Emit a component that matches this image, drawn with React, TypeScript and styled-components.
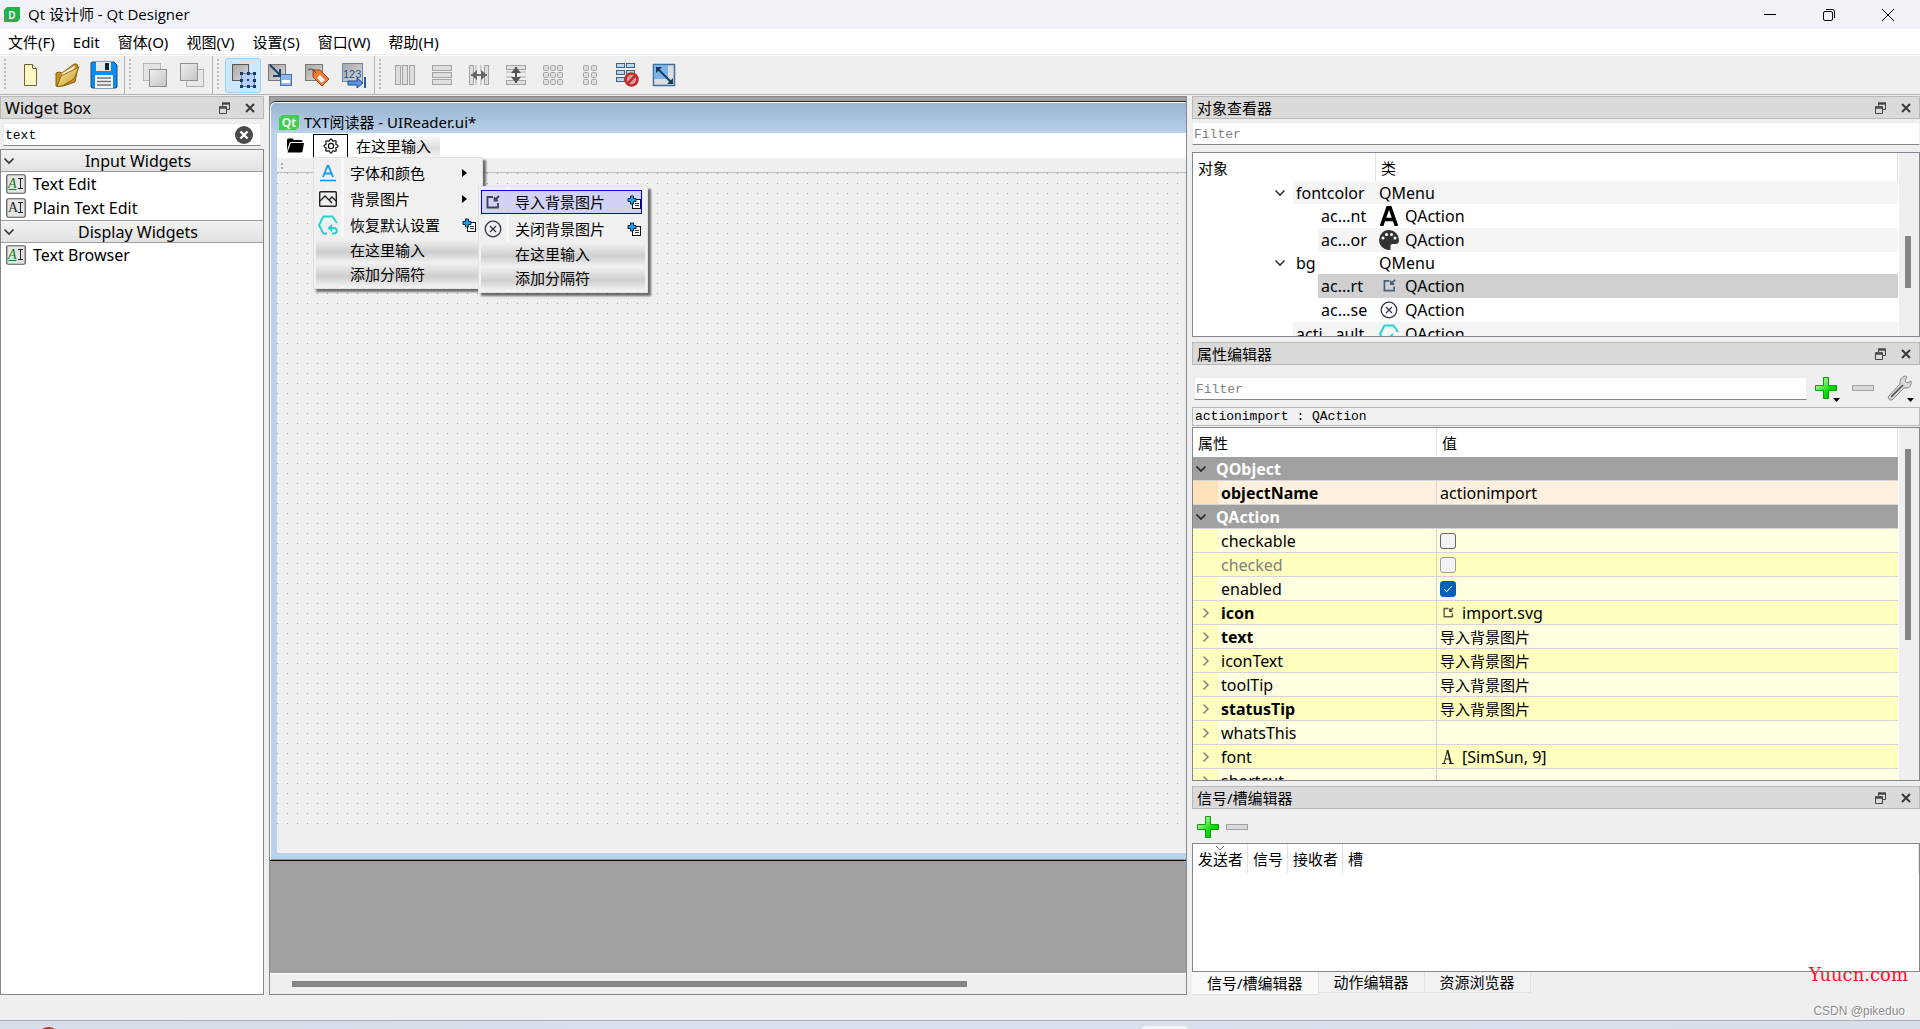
import React from "react";
import styled, { createGlobalStyle, css } from "styled-components";

const UI = `"Noto Sans", "Noto Sans CJK SC", sans-serif`;
const MONO = `"Liberation Mono", "Noto Sans CJK SC", monospace`;

const Global = createGlobalStyle`
  *, *::before, *::after { box-sizing: border-box; }
  body { margin: 0; background: #efefef; font: 15px/22px ${UI}; color: #000; overflow: hidden; }
  button { font: inherit; color: inherit; background: none; border: 0; padding: 0; margin: 0; }
  input { font: inherit; margin: 0; }
  table { border-collapse: separate; border-spacing: 0; }
  svg { display: block; flex: none; }
  h2 { margin: 0; font-weight: 400; }
`;

/* ---------- frame ---------- */
const Window = styled.div`
  display: flex;
  flex-direction: column;
  height: 100vh;
`;
const TitleBar = styled.header`
  display: flex;
  align-items: center;
  flex: none;
  height: 29px;
  padding: 0 3px 0 4px;
  background: #f0f2f8;
`;
const AppTitle = styled.span`
  flex: 1;
  padding: 0 0 2px 8px;
  font-family: "Open Sans", "Noto Sans CJK SC", sans-serif;
`;
const WindowButton = styled.button`
  display: flex;
  align-items: center;
  justify-content: center;
  width: 59px;
  height: 29px;
`;
const MenuBar = styled.nav`
  display: flex;
  align-items: center;
  gap: 18px;
  flex: none;
  height: 27px;
  padding: 0 8px 1px;
  background: linear-gradient(#fff 25px, #ececec 25px, #ececec 26px, #fff 26px);
`;
const ToolBar = styled.div`
  display: flex;
  flex: none;
  height: 39px;
  border-bottom: 1px solid #b4b4b4;
`;
const ToolGroup = styled.div<{ $last?: boolean }>`
  display: flex;
  align-items: center;
  gap: 1px;
  padding-right: 2px;
  border-right: ${(p) => (p.$last ? 0 : 1)}px solid #b4b4b4;
`;
const Grip = styled.span`
  width: 11px;
  height: 32px;
  background: conic-gradient(from 0deg at 6px 2px, transparent 75%, #bdbdbd 0) 0 0 / 11px 4px;
  clip-path: inset(0 0 0 4px);
`;
const ToolButton = styled.button<{ $on?: boolean }>`
  display: flex;
  align-items: center;
  justify-content: center;
  width: 36px;
  height: 35px;
  border: 1px solid ${(p) => (p.$on ? "#99d1ff" : "transparent")};
  border-radius: 3px;
  background: ${(p) => (p.$on ? "#cce8ff" : "transparent")};
`;
const Workspace = styled.main`
  display: grid;
  grid-template-columns: 264px minmax(0, 1fr) 728px;
  column-gap: 5px;
  flex: 1;
  min-height: 0;
  padding-top: 1px;
`;
const StatusBar = styled.footer`
  display: flex;
  align-items: flex-end;
  justify-content: flex-end;
  flex: none;
  height: 25px;
  padding: 0 15px;
  font: 12px/18px "Liberation Sans", sans-serif;
  color: #8c8c8c;
  text-shadow: 1px 1px 0 #fff;
`;
const TaskBar = styled.div`
  flex: none;
  height: 9px;
  overflow: hidden;
  border-top: 1px solid #adb0bc;
  background: linear-gradient(90deg, #d6dce8, #dadfed 40%, #d8deea);
`;

/* ---------- docks ---------- */
const Dock = styled.section<{ $grow?: number }>`
  display: flex;
  flex-direction: column;
  flex: ${(p) => p.$grow ?? 1} 1 0;
  min-height: 0;
  min-width: 0;
`;
const DockHead = styled.header`
  display: flex;
  align-items: center;
  flex: none;
  height: 23px;
  padding: 0 0 0 4px;
  border: 1px solid #b8b8b8;
  background: #dadada;
`;
const DockTitle = styled.h2<{ $latin?: boolean }>`
  flex: 1;
  font-size: ${(p) => (p.$latin ? 16 : 15)}px;
  line-height: 22px;
`;
const DockButton = styled.button`
  display: flex;
  align-items: center;
  justify-content: center;
  width: 26px;
  height: 21px;
`;
const ClearButton = styled(DockButton)`
  width: 32px;
`;
const RightColumn = styled.div`
  display: flex;
  flex-direction: column;
  gap: 5px;
  min-height: 0;
`;
const Field = styled.div`
  display: flex;
  align-items: center;
  flex: 1;
  height: 23px;
  background: #fff;
  border: 1px solid #ebebeb;
  border-bottom-color: #868686;
`;
const FieldInput = styled.input`
  flex: 1;
  min-width: 0;
  height: 21px;
  padding: 2px 1px 0;
  border: 0;
  outline: 0;
  background: transparent;
  font: 13px/19px ${MONO};
  &::placeholder { color: #808080; opacity: 1; }
`;
const FieldRow = styled.div<{ $pad: string }>`
  display: flex;
  align-items: center;
  flex: none;
  padding: ${(p) => p.$pad};
`;
const Pane = styled.div`
  display: flex;
  flex: 1;
  min-height: 0;
  overflow: hidden;
  border: 1px solid #828790;
  background: #fff;
`;
const PaneBody = styled.div`
  flex: 1;
  min-width: 0;
  overflow: hidden;
`;
const ScrollTrack = styled.div<{ $before: number }>`
  display: flex;
  justify-content: center;
  width: 20px;
  padding: ${(p) => p.$before}px 2px 0 0;
  margin-left: 1px;
  background: #efefef;
`;
const ScrollThumb = styled.span<{ $len: number }>`
  width: 6px;
  height: ${(p) => p.$len}px;
  background: #858585;
`;

/* ---------- widget box ---------- */
const Category = styled.button`
  display: flex;
  align-items: center;
  width: 100%;
  height: 22px;
  padding: 0 2px;
  border-bottom: 1px solid #9a9a9f;
  background: linear-gradient(#f2f2f2, #e2e2e2);
  font-size: 16px;
  line-height: 20px;
  span { flex: 1; text-align: center; }
`;
const CategoryList = styled.ul<{ $ruled?: boolean }>`
  list-style: none;
  margin: 0;
  padding: 0;
  border-bottom: ${(p) => (p.$ruled ? 1 : 0)}px solid #9a9a9f;
`;
const WidgetItem = styled.li`
  display: flex;
  align-items: center;
  gap: 7px;
  height: 24px;
  padding-left: 5px;
  font-size: 16px;
`;

/* ---------- form designer ---------- */
const Mdi = styled.section`
  display: flex;
  flex-direction: column;
  min-width: 0;
  border: 1px solid #828790;
`;
const Canvas = styled.div`
  flex: 1;
  min-height: 0;
  overflow: hidden;
  padding-top: 4px;
  background: #a0a0a0;
`;
const FormWindow = styled.div`
  display: flex;
  flex-direction: column;
  height: 760px;
  border-top: 1px solid #222;
  border-bottom: 1px solid #000;
  border-radius: 6px 0 0 0;
  background: #b9d1ea;
  box-shadow: inset 1px 1px 0 #fff, inset 0 -1px 0 #35b9d6;
`;
const FormTitle = styled.div`
  display: flex;
  align-items: center;
  gap: 5px;
  flex: none;
  height: 30px;
  margin: 1px 0 0 1px;
  padding: 8px 0 0 8px;
  border-top-left-radius: 5px;
  background: linear-gradient(#99b4d1, #b9d1ea);
  line-height: 20px;
`;
const FormClient = styled.div`
  display: flex;
  flex-direction: column;
  flex: 1;
  margin: 0 0 7px 7px;
  background: #efefef;
`;
const FormMenu = styled.div`
  display: flex;
  flex: none;
  height: 27px;
  padding-top: 1px;
  border-bottom: 2px solid #f0f0f0;
  background: #fff;
`;
const FormMenuButton = styled.button<{ $open?: boolean }>`
  display: flex;
  align-items: center;
  justify-content: center;
  width: ${(p) => (p.$open ? 35 : 36)}px;
  height: 23px;
  border: ${(p) => (p.$open ? "1px solid #000" : "0")};
  border-bottom: 0;
`;
const MenuAnchor = styled.div`
  position: relative;
`;
const TypeHere = styled.button`
  width: 92px;
  height: 23px;
  padding-left: 8px;
  text-align: left;
  background: linear-gradient(100deg, #fff 20%, transparent 70%), linear-gradient(#fff, #dcdcdc 60%, #f4f4f4);
`;
const FormToolStrip = styled.div`
  flex: none;
  height: 13px;
  padding: 3px;
  border-bottom: 1px solid #bdbdbd;
`;
const DotGrid = styled.div`
  flex: none;
  height: 657px;
  background: conic-gradient(from 0deg at 1px 1px, transparent 75%, #a0a0a0 0) 0 0 / 10px 10px;
`;
const Popup = styled.div<{ $sub?: boolean }>`
  position: absolute;
  z-index: 5;
  top: ${(p) => (p.$sub ? 0 : 23)}px;
  left: ${(p) => (p.$sub ? 162 : 0)}px;
  width: 170px;
  padding: 2px;
  border: 1px solid #e2e2e2;
  background: linear-gradient(90deg, #f0f0f0 27px, #f8f8f8 27px, #f8f8f8 30px, #f0f0f0 30px);
  box-shadow: 3px 3px 2px rgba(0, 0, 0, 0.55);
`;
const PopupRow = styled.div<{ $ghost?: boolean }>`
  position: relative;
  height: ${(p) => (p.$ghost ? 24 : 26)}px;
`;
const PopupItem = styled.button<{ $ghost?: boolean; $hot?: boolean }>`
  display: flex;
  align-items: center;
  width: 100%;
  height: 100%;
  text-align: left;
  ${(p) =>
    p.$ghost &&
    css`
      background: linear-gradient(#f0f0f0 5%, #cecece 60%, #f0f0f0);
    `}
  ${(p) =>
    p.$hot &&
    css`
      width: calc(100% - 3px);
      height: 24px;
      margin-top: 1px;
      outline: 1px solid #0000ff;
      outline-offset: -1px;
      background: #d2d2f4;
    `}
`;
const PopupIcon = styled.span`
  display: flex;
  justify-content: center;
  width: 24px;
`;
const PopupText = styled.span`
  flex: 1;
  padding-left: 10px;
`;
const PopupTail = styled.span<{ $end: number }>`
  padding-right: ${(p) => p.$end}px;
`;
const HScroll = styled.div`
  flex: none;
  height: 21px;
  padding: 7px 219px 0 22px;
  border-top: 1px solid #fff;
  background: #efefef;
`;
const HThumb = styled.div`
  height: 6px;
  background: #858585;
`;

/* ---------- object inspector ---------- */
const DataTable = styled.table`
  width: 100%;
  table-layout: fixed;
  th, td { padding: 0; font-weight: 400; text-align: left; }
`;
const HeadCell = styled.th<{ $w?: number }>`
  width: ${(p) => (p.$w ? `${p.$w}px` : "auto")};
  height: 29px;
  border-right: 1px solid #e2e2e2;
  > span { padding-left: 5px; }
`;
const TreeRow = styled.tr<{ $h: number }>`
  height: ${(p) => p.$h}px;
  font-size: 16px;
  line-height: 20px;
`;
const shade = { even: "#f4f4f4", odd: "#fff", sel: "#d0d0d0" };
type Shade = keyof typeof shade;
const NameCell = styled.td<{ $indent: number }>`
  > div { display: flex; padding-left: ${(p) => p.$indent}px; }
`;
const TreeToggle = styled.button`
  display: flex;
  align-items: center;
  justify-content: center;
  width: 25px;
  padding-right: 1px;
`;
const TreeName = styled.span<{ $bg: Shade; $h: number }>`
  flex: 1;
  height: ${(p) => p.$h}px;
  padding-left: 3px;
  line-height: ${(p) => p.$h}px;
  white-space: nowrap;
  background: ${(p) => shade[p.$bg]};
`;
const ClassCell = styled.td<{ $bg: Shade }>`
  background: ${(p) => shade[p.$bg]};
  > div { display: flex; align-items: center; gap: 6px; padding-left: 3px; }
`;

/* ---------- property editor ---------- */
const IconButton = styled.button<{ $w: number }>`
  display: flex;
  align-items: center;
  justify-content: center;
  position: relative;
  width: ${(p) => p.$w}px;
  height: 30px;
`;
const DropMark = styled.svg`
  position: absolute;
  right: 4px;
  bottom: 1px;
`;
const ObjectLabel = styled.div`
  flex: none;
  height: 19px;
  margin-bottom: 1px;
  padding-left: 2px;
  border: 1px solid #b8b8b8;
  background: #f1f1f1;
  font: 13px/18px ${MONO};
`;
const PropRow = styled.tr<{ $tone: string }>`
  height: 24px;
  background: ${(p) => p.$tone};
  font-size: 16px;
  line-height: 20px;
  > td { border-bottom: 1px solid #d4d4d8; }
`;
const GroupCell = styled.td`
  color: #fff;
  && { font-weight: 700; }
  button { display: flex; align-items: center; gap: 9px; padding-left: 2px; font-weight: 700; }
`;
const PropName = styled.td<{ $bold?: boolean; $off?: boolean; $gutter: string }>`
  border-right: 1px solid #d4d4d8;
  color: ${(p) => (p.$off ? "#808080" : "#000")};
  background: linear-gradient(90deg, ${(p) => p.$gutter} 25px, transparent 25px);
  && { font-weight: ${(p) => (p.$bold ? 700 : 400)}; }
  > div { display: flex; align-items: center; }
`;
const PropToggle = styled.span`
  display: flex;
  justify-content: center;
  width: 28px;
  padding-right: 3px;
`;
const PropValue = styled.td<{ $cjk?: boolean }>`
  font-size: ${(p) => (p.$cjk ? 15 : 16)}px;
  > div { display: flex; align-items: center; padding-left: 3px; }
`;
const ValueIcon = styled.span`
  display: flex;
  justify-content: flex-start;
  width: 22px;
`;
const Check = styled.input`
  appearance: none;
  position: relative;
  width: 16px;
  height: 16px;
  border: 1px solid #666;
  border-radius: 3px;
  background: #f4f4f4;
  &:disabled { border-color: #a0a0a0; }
  &:checked { border-color: #005fb8; background: #005fb8; }
  &:checked::after {
    content: "";
    position: absolute;
    left: 3px;
    top: 4px;
    width: 8px;
    height: 4px;
    border: solid #fff;
    border-width: 0 0 1px 1px;
    transform: rotate(-45deg);
  }
`;

/* ---------- signals ---------- */
const SignalTools = styled.div`
  display: flex;
  align-items: center;
  flex: none;
  height: 34px;
  padding: 2px 0 0 1px;
`;
const SignalHead = styled(HeadCell)`
  vertical-align: top;
  > span { display: block; padding-top: 4px; white-space: nowrap; }
`;
const SortMark = styled.svg`
  position: absolute;
  left: 22px;
  top: 1px;
`;
const SortAnchor = styled.span`
  position: relative;
`;
const TabBar = styled.div`
  display: flex;
  flex: none;
  align-items: flex-start;
  height: 23px;
`;
const Tab = styled.button<{ $on?: boolean }>`
  height: ${(p) => (p.$on ? 23 : 21)}px;
  padding: 0 15px;
  border-right: 1px solid #e2e2e2;
  border-bottom: 1px solid #e2e2e2;
  background: ${(p) => (p.$on ? "#f9f9f9" : "#f2f2f2")};
  line-height: 20px;
`;
const SiteMark = styled.div`
  position: absolute;
  right: 12px;
  bottom: 9px;
  font: 18px/22px "DejaVu Serif", serif;
  color: #f5142a;
`;
const SignalDock = styled(Dock)`
  position: relative;
`;

/* ---------- drawings ---------- */
const Down = ({ c = "#333" }: { c?: string }) => (
  <svg width="12" height="8" viewBox="0 0 12 8" fill="none" stroke={c} strokeWidth="1.6"><path d="M1.5 1.5 6 6l4.5-4.5" /></svg>
);
const Right = () => (
  <svg width="8" height="12" viewBox="0 0 8 12" fill="none" stroke="#808080" strokeWidth="1.5"><path d="M1.5 1.5 6 6l-4.5 4.5" /></svg>
);
const FloatIcon = () => (
  <svg width="11" height="12" viewBox="0 0 11 12" fill="none" stroke="#444" strokeWidth="1">
    <path d="M3.5 4V1.5h7v6H8" /><path d="M3 1.5h8" strokeWidth="2.4" /><path d="M.5 5v6.5h7V5z" /><path d="M0 5.5h8" strokeWidth="2.4" />
  </svg>
);
const CloseSmall = () => (
  <svg width="10" height="10" viewBox="0 0 10 10" stroke="#3a3a3a" strokeWidth="2"><path d="M1 1l8 8M9 1 1 9" /></svg>
);
const Green = () => (
  <svg width="22" height="22" viewBox="0 0 22 22">
    <defs><linearGradient id="gp" x1="0" y1="0" x2="1" y2="1"><stop offset="0.2" stopColor="#a8f59c" /><stop offset="0.6" stopColor="#0bdc0b" /><stop offset="1" stopColor="#00b400" /></linearGradient></defs>
    <path d="M8.5.5h5v8h8v5h-8v8h-5v-8h-8v-5h8z" fill="url(#gp)" stroke="#0a9c0a" />
  </svg>
);
const Minus = () => (
  <svg width="22" height="6" viewBox="0 0 22 6"><rect x=".5" y=".5" width="21" height="5" fill="#d9d9dc" stroke="#a3a0a5" /></svg>
);
const ImportIcon = ({ s = 14, c = "#3f4058" }: { s?: number; c?: string }) => (
  <svg width={s} height={s} viewBox="0 0 14 14" fill="none" stroke={c} strokeWidth="1.8">
    <path d="M7 2H1.500v10.500H12V8" /><path d="M13 1 9.500 4.500M8.500 2v3.500H12" />
  </svg>
);
const CircleX = () => (
  <svg width="18" height="18" viewBox="0 0 18 18" fill="none" stroke="#33344a" strokeWidth="1.3"><circle cx="9" cy="9" r="7.8" /><path d="M6 6l6 6M12 6l-6 6" /></svg>
);
const HexReset = () => (
  <svg width="20" height="20" viewBox="0 0 20 20" fill="none" stroke="#1fd4cf" strokeWidth="1.9">
    <path d="M9 18.500H5.500L1 10l4.500-8.500h9L19 8" /><path d="M11.500 13H16a2.700 2.700 0 0 1 0 5.500h-2M14 10l-3 3 3 3" />
  </svg>
);
const ActionBadge = () => (
  <svg width="14" height="14" viewBox="0 0 14 14">
    <rect x="5.5" y="4.5" width="8" height="9" fill="#fff" stroke="#111" /><path d="M8 8.500h4M8 10.500h4" stroke="#333" />
    <path d="M3.500 1h3v2.500H9v3H6.500V9h-3V6.500H1v-3h2.500z" fill="#16a5f5" stroke="#00263f" />
  </svg>
);
const AEdit = ({ green }: { green?: boolean }) => (
  <svg width="20" height="20" viewBox="0 0 20 20">
    <rect x=".75" y=".75" width="18.5" height="18.5" rx="1.5" fill="#e4e4e4" stroke="#555" strokeWidth="1.2" />
    <text x="2" y="14" fontFamily="Liberation Serif, serif" fontSize="14" fontStyle={green ? "italic" : "normal"} fill={green ? "#157a1e" : "#222"}>A</text>
    {green && <path d="M2.500 15.500h8" stroke="#157a1e" />}
    <path d="M12 4.500h5M14.500 4.500v10M12 14.500h5" stroke="#222" fill="none" />
  </svg>
);
const QtMark = ({ w, t }: { w: number; t: string }) => (
  <svg width={w} height="15" viewBox={`0 0 ${w} 15`}>
    <path d={`M3 0H${w}v12l-3 3H0V3z`} fill={w === 20 ? "#41cd52" : "#21b24b"} />
    <text x={w / 2} y="11.5" textAnchor="middle" fontFamily="Noto Sans, sans-serif" fontSize={w === 20 ? 12 : 10} fontWeight="600" fill="#fff">{t}</text>
  </svg>
);
const Gear = () => {
  const pts = Array.from({ length: 64 }, (_, i) => {
    const a = (i / 64) * Math.PI * 2;
    const r = 6.1 + 0.9 * Math.cos(a * 8);
    return `${(8 + r * Math.cos(a)).toFixed(2)},${(8 + r * Math.sin(a)).toFixed(2)}`;
  }).join(" ");
  return (
    <svg width="16" height="16" viewBox="0 0 16 16" fill="none" stroke="#111" strokeWidth="1.2"><polygon points={pts} /><circle cx="8" cy="8" r="2.6" /></svg>
  );
};
const T = ({ children }: { children: React.ReactNode }) => (
  <svg width="28" height="28" viewBox="0 0 28 28">{children}</svg>
);
const bar = { fill: "#dedede", stroke: "#a2a2a2" };
const Defs = () => (
  <defs>
    <linearGradient id="sq" x1="0" y1="0" x2="1" y2="1"><stop offset="0" stopColor="#a6a6a6" /><stop offset="1" stopColor="#dcdcdc" /></linearGradient>
    <linearGradient id="pale" x1="0" y1="0" x2="1" y2="1"><stop offset="0" stopColor="#f0f0f0" /><stop offset="1" stopColor="#c4c4c4" /></linearGradient>
    <linearGradient id="gold" x1="0" y1="0" x2="1" y2="1"><stop offset="0" stopColor="#fdf3b8" /><stop offset="1" stopColor="#c99316" /></linearGradient>
  </defs>
);
const tools: { name: string; on?: boolean; art: React.ReactNode }[][] = [
  [
    { name: "新建", art: <T><Defs /><path d="M8.500 3.500h8l4 4v17h-12z" fill="#fff8c4" stroke="#6e6336" /><path d="M16.500 3.500v4h4" fill="#fff" stroke="#6e6336" /></T> },
    { name: "打开", art: <T><path d="M3 25V12l3-1 3 1 12-9h3l1 3-3 15-12 4z" fill="#c89220" stroke="#86600e" /><path d="M6 23 9 12 22 4v4" fill="#fff5d6" stroke="#b98e3a" /><path d="M4 25.500 8 15l18-9-5 12-12 7z" fill="url(#gold)" stroke="#8a6512" /></T> },
    { name: "保存", art: <T><path d="M1 2 2 1h22l3 3v22l-1 1H2l-1-1z" fill="#0a8cf0" stroke="#17507e" /><path d="M6 1h15v9H6z" fill="#e8e8e8" /><path d="M15 2h4v7h-4z" fill="#222" /><path d="M5 14h18v13H5z" fill="#f5f5f5" /><path d="M7 17h14M7 20.500h14M7 24h14" stroke="#777" strokeWidth="1.5" /></T> },
  ],
  [
    { name: "置于前面", art: <T><rect x="2.5" y="2.5" width="17" height="17" fill="#e4e4e4" stroke="#b8b8b8" /><rect x="8.5" y="8.5" width="17" height="17" fill="url(#pale)" stroke="#909090" /></T> },
    { name: "置于后面", art: <T><rect x="8.5" y="8.5" width="17" height="17" fill="#e8e8e8" stroke="#b0b0b0" /><rect x="2.5" y="2.5" width="17" height="17" fill="url(#pale)" stroke="#909090" /></T> },
  ],
  [
    { name: "编辑控件", on: true, art: <T><rect x="3.5" y="3.5" width="16" height="16" fill="url(#sq)" stroke="#555" /><rect x="12.5" y="12.5" width="13" height="13" fill="#b4cffa" stroke="#5c82bd" />{[12, 19, 25].map((x) => [12, 19, 25].map((y) => (x === 19 && y === 19 ? <rect key="mid" x="18" y="18" width="2" height="2" fill="#1d3866" /> : <rect key={`${x}${y}`} x={x - 1} y={y - 1} width="3" height="3" fill="#1d3866" />)))}</T> },
    { name: "编辑信号/槽", art: <T><rect x="2.5" y="3.5" width="17" height="16" fill="url(#sq)" stroke="#777" /><rect x="14.5" y="13.5" width="11" height="11" fill="#8fb8f2" stroke="#4a6fa5" /><path d="M16 19h8v3h-8z" fill="#fff" /><path d="M4 4 14 14M14 8v7H7" fill="none" stroke="#1f4366" strokeWidth="2" /></T> },
    { name: "编辑伙伴", art: <T><rect x="2.5" y="3.5" width="17" height="16" fill="url(#sq)" stroke="#777" /><path d="M10 9h7l9 9-7 7-9-9z" fill="#ef7b34" stroke="#a64310" /><path d="m17 14 5 5-3 3-5-5z" fill="#fff" /><path d="M5 9q4-3 8 3" fill="none" stroke="#444" /></T> },
    { name: "编辑 Tab 顺序", art: <T><rect x="2.5" y="2.5" width="20" height="18" fill="url(#sq)" stroke="#6c86b5" /><text x="3" y="17" fontFamily="Liberation Sans, sans-serif" fontSize="11" fill="#1d4f96">123</text><path d="M8 20h9v-3l6 5-6 5v-3H8z" fill="#5b93df" stroke="#1d4a88" /><path d="M25 16v11" stroke="#2b5a9c" strokeWidth="2" /></T> },
  ],
  [
    { name: "水平布局", art: <T>{[4, 11, 18].map((x) => <rect key={x} x={x + 0.5} y="4.5" width="5" height="19" {...bar} />)}</T> },
    { name: "垂直布局", art: <T>{[4, 11, 18].map((y) => <rect key={y} x="4.5" y={y + 0.5} width="19" height="5" {...bar} />)}</T> },
    { name: "使用分裂器水平布局", art: <T><rect x="4.5" y="4.5" width="4" height="19" {...bar} /><rect x="19.5" y="4.5" width="4" height="19" {...bar} /><path d="M11 4v7M16 4v7M11 18v6M16 18v6" stroke="#aaa" /><path d="M6 14h16" stroke="#666" strokeWidth="2" /><path d="m12 9-6 5 6 5zM16 9l6 5-6 5z" fill="#666" /></T> },
    { name: "使用分裂器垂直布局", art: <T><rect x="4.5" y="4.5" width="19" height="4" {...bar} /><rect x="4.5" y="19.5" width="19" height="4" {...bar} /><path d="M4 11h7M4 16h7M17 11h7M17 16h7" stroke="#aaa" /><path d="M14 6v16" stroke="#555" strokeWidth="2" /><path d="m9 12 5-6 5 6zM9 16l5 6 5-6z" fill="#555" /></T> },
    { name: "栅格布局", art: <T>{[4, 11, 18].map((x) => [4, 11, 18].map((y) => <rect key={`${x}-${y}`} x={x + 0.5} y={y + 0.5} width="5" height="5" rx="1" {...bar} />))}</T> },
    { name: "在窗体布局中布局", art: <T>{[7, 15].map((x) => [4, 11, 18].map((y) => <rect key={`${x}-${y}`} x={x + 0.5} y={y + 0.5} width="5" height="5" rx="1" {...bar} />))}</T> },
    { name: "打破布局", art: <T>{[3, 13].map((x) => [2, 9, 16].map((y) => <rect key={`${x}-${y}`} x={x + 0.5} y={y + 0.5} width="8" height="4" fill="#b5d9f2" stroke="#40617f" />))}<circle cx="18.5" cy="18.5" r="6" fill="#d8a0a0" stroke="#c0302b" strokeWidth="2.6" /><path d="m14.500 22.500 8-8" stroke="#c0302b" strokeWidth="2.6" /></T> },
    { name: "调整大小", art: <T><rect x="3.5" y="3.5" width="21" height="21" fill="#dedede" stroke="#3d6e9e" strokeWidth="1.5" /><path d="M4 4h14v14H4z" fill="#7fb2e6" /><path d="m8 8 13 13" stroke="#16395c" strokeWidth="2" /><path d="M6 12V6h6zM23 17v6h-6z" fill="#16395c" /></T> },
  ],
];

const DockHeader = ({ title, latin }: { title: string; latin?: boolean }) => (
  <DockHead>
    <DockTitle $latin={latin}>{title}</DockTitle>
    <DockButton aria-label="浮动"><FloatIcon /></DockButton>
    <DockButton aria-label="关闭"><CloseSmall /></DockButton>
  </DockHead>
);

const AIcon = () => <svg width="20" height="20" viewBox="0 0 20 20" fill="none" stroke="#000" strokeWidth="3.6"><path d="M2.500 20 9 1.500h2L17.500 20M5.500 13.500h9" /></svg>;
const Palette = () => (
  <svg width="20" height="20" viewBox="0 0 20 20"><path d="M10 0a10 10 0 1 0 1.500 19.900V16q0-2 2-2h3q3.500 0 3.500-4A10 10 0 0 0 10 0z" fill="#333" />{[[4, 8], [7.5, 4.5], [12.5, 4.5], [16, 8]].map(([x, y]) => <circle key={x} cx={x} cy={y} r="1.5" fill="#fff" />)}</svg>
);
const ImportBox = () => <svg width="20" height="14" viewBox="-4 0 20 14"><ImportIcon s={13} c="#466079" /></svg>;
const XBox = () => <svg width="20" height="18" viewBox="-1 0 20 18"><CircleX /></svg>;

const tree: { name: string; cls: string; h: number; bg: Shade; open?: boolean; level: number; icon?: React.ReactNode }[] = [
  { name: "fontcolor", cls: "QMenu", h: 22, bg: "even", open: true, level: 0 },
  { name: "ac...nt", cls: "QAction", h: 24, bg: "odd", level: 1, icon: <AIcon /> },
  { name: "ac...or", cls: "QAction", h: 24, bg: "even", level: 1, icon: <Palette /> },
  { name: "bg", cls: "QMenu", h: 22, bg: "odd", open: true, level: 0 },
  { name: "ac...rt", cls: "QAction", h: 24, bg: "sel", level: 1, icon: <ImportBox /> },
  { name: "ac...se", cls: "QAction", h: 24, bg: "odd", level: 1, icon: <XBox /> },
  { name: "acti...ault", cls: "QAction", h: 24, bg: "even", level: 0, icon: <HexReset /> },
];

const Y1 = "#ffffdf";
const Y2 = "#ffffbf";
type Prop = { group?: boolean; name: string; tone: string; gutter?: string; bold?: boolean; off?: boolean; expand?: boolean; value?: string; check?: boolean; icon?: React.ReactNode };
const props: Prop[] = [
  { group: true, name: "QObject", tone: "#a0a0a0" },
  { name: "objectName", tone: "#fff0de", gutter: "#ffe1ba", bold: true, value: "actionimport" },
  { group: true, name: "QAction", tone: "#a0a0a0" },
  { name: "checkable", tone: Y1, check: false },
  { name: "checked", tone: Y2, check: false, off: true },
  { name: "enabled", tone: Y1, check: true },
  { name: "icon", tone: Y2, bold: true, expand: true, value: "import.svg", icon: <svg width="14" height="12" viewBox="-3 0 14 12"><ImportIcon s={11} c="#5c5a44" /></svg> },
  { name: "text", tone: Y1, bold: true, expand: true, value: "导入背景图片" },
  { name: "iconText", tone: Y2, expand: true, value: "导入背景图片" },
  { name: "toolTip", tone: Y1, expand: true, value: "导入背景图片" },
  { name: "statusTip", tone: Y2, bold: true, expand: true, value: "导入背景图片" },
  { name: "whatsThis", tone: Y1, expand: true, value: "" },
  { name: "font", tone: Y2, expand: true, value: "[SimSun, 9]", icon: <svg width="16" height="18" viewBox="0 0 16 18" fill="none" stroke="#222"><path d="M2 15.500h4M9 15.500h4.500M4 15.500 7.500 2M5 11h5" /><path d="M7.500 2 11 15.500" strokeWidth="1.8" /></svg> },
  { name: "shortcut", tone: Y1, expand: true, value: "" },
];

const Ghosts = () => (
  <>
    {["在这里输入", "添加分隔符"].map((t) => (
      <PopupRow key={t} $ghost><PopupItem $ghost><PopupIcon /><PopupText>{t}</PopupText></PopupItem></PopupRow>
    ))}
  </>
);
const Arrow = () => <svg width="5" height="8" viewBox="0 0 5 8"><path d="M0 0 5 4 0 8z" /></svg>;

export default function App() {
  return (
    <Window>
      <Global />
      <TitleBar>
        <QtMark w={16} t="D" />
        <AppTitle>Qt 设计师 - Qt Designer</AppTitle>
        <WindowButton aria-label="最小化"><svg width="12" height="12" viewBox="0 0 12 12" stroke="#000"><path d="M0 5.500h12" /></svg></WindowButton>
        <WindowButton aria-label="还原"><svg width="12" height="12" viewBox="0 0 12 12" fill="none" stroke="#000"><rect x=".5" y="2.5" width="9" height="9" rx="1.5" /><path d="M3 .5h6.500q2 0 2 2V9" /></svg></WindowButton>
        <WindowButton aria-label="关闭"><svg width="12" height="12" viewBox="0 0 12 12" stroke="#000"><path d="m0 0 12 12M12 0 0 12" /></svg></WindowButton>
      </TitleBar>
      <MenuBar>
        {["文件(F)", "Edit", "窗体(O)", "视图(V)", "设置(S)", "窗口(W)", "帮助(H)"].map((m) => <button key={m}>{m}</button>)}
      </MenuBar>
      <ToolBar>
        {tools.map((g, i) => (
          <ToolGroup key={i} $last={i === tools.length - 1}>
            <Grip />
            {g.map((t) => <ToolButton key={t.name} $on={t.on} aria-label={t.name}>{t.art}</ToolButton>)}
          </ToolGroup>
        ))}
      </ToolBar>

      <Workspace>
        <Dock>
          <DockHeader title="Widget Box" latin />
          <FieldRow $pad="4px 3px 3px">
            <Field>
              <FieldInput aria-label="Filter" defaultValue="text" />
              <ClearButton aria-label="清除">
                <svg width="18" height="18" viewBox="0 0 18 18"><circle cx="9" cy="9" r="9" fill="#4a4a4a" /><path d="m5.500 5.500 7 7M12.500 5.500l-7 7" stroke="#fff" strokeWidth="2.4" /></svg>
              </ClearButton>
            </Field>
          </FieldRow>
          <Pane>
            <PaneBody>
              <Category><Down /><span>Input Widgets</span></Category>
              <CategoryList $ruled>
                <WidgetItem><AEdit green />Text Edit</WidgetItem>
                <WidgetItem><AEdit />Plain Text Edit</WidgetItem>
              </CategoryList>
              <Category><Down /><span>Display Widgets</span></Category>
              <CategoryList>
                <WidgetItem><AEdit green />Text Browser</WidgetItem>
              </CategoryList>
            </PaneBody>
          </Pane>
        </Dock>

        <Mdi>
          <Canvas>
            <FormWindow>
              <FormTitle><QtMark w={20} t="Qt" />TXT阅读器 - UIReader.ui*</FormTitle>
              <FormClient>
                <FormMenu>
                  <FormMenuButton aria-label="打开">
                    <svg width="18" height="15" viewBox="0 0 18 15"><path d="M1 13V2q0-1.500 1.500-1.500h4L8 2h7q1.500 0 1.500 2H5L3.500 5z" /><path d="M4.500 5H18l-1.500 8.500q-.3 1-1.500 1H1.500z" /><path d="M2 11 4.500 4.500H16" stroke="#fff" fill="none" strokeWidth=".8" /></svg>
                  </FormMenuButton>
                  <MenuAnchor>
                    <FormMenuButton $open aria-label="设置"><Gear /></FormMenuButton>
                    <Popup>
                      <PopupRow>
                        <PopupItem>
                          <PopupIcon><svg width="16" height="17" viewBox="0 0 16 17" fill="none" stroke="#1f9ae0"><path d="M3 12 7.500 1h1L13 12M5 8.500h6" strokeWidth="1.9" /><path d="M0 15.500h16" strokeWidth="1.6" /></svg></PopupIcon>
                          <PopupText>字体和颜色</PopupText><PopupTail $end={13}><Arrow /></PopupTail>
                        </PopupItem>
                      </PopupRow>
                      <PopupRow>
                        <PopupItem>
                          <PopupIcon><svg width="18" height="16" viewBox="0 0 18 16" fill="none" stroke="#222" strokeWidth="1.4"><rect x=".7" y=".7" width="16.6" height="14.6" rx="1" /><path d="M1 10 6 5l7 7M10 9l3-3 4 4" /></svg></PopupIcon>
                          <PopupText>背景图片</PopupText><PopupTail $end={13}><Arrow /></PopupTail>
                        </PopupItem>
                        <Popup $sub>
                          <PopupRow><PopupItem $hot><PopupIcon><ImportIcon /></PopupIcon><PopupText>导入背景图片</PopupText><PopupTail $end={1}><ActionBadge /></PopupTail></PopupItem></PopupRow>
                          <PopupRow><PopupItem><PopupIcon><CircleX /></PopupIcon><PopupText>关闭背景图片</PopupText><PopupTail $end={4}><ActionBadge /></PopupTail></PopupItem></PopupRow>
                          <Ghosts />
                        </Popup>
                      </PopupRow>
                      <PopupRow>
                        <PopupItem><PopupIcon><HexReset /></PopupIcon><PopupText>恢复默认设置</PopupText><PopupTail $end={4}><ActionBadge /></PopupTail></PopupItem>
                      </PopupRow>
                      <Ghosts />
                    </Popup>
                  </MenuAnchor>
                  <TypeHere>在这里输入</TypeHere>
                </FormMenu>
                <FormToolStrip><svg width="4" height="8" viewBox="0 0 4 8" fill="#b0b0b0"><path d="M1 0h2v2H1zM1 4h2v2H1z" /></svg></FormToolStrip>
                <DotGrid />
              </FormClient>
            </FormWindow>
          </Canvas>
          <HScroll><HThumb /></HScroll>
        </Mdi>

        <RightColumn>
          <Dock $grow={241}>
            <DockHeader title="对象查看器" />
            <FieldRow $pad="3px 0 7px"><Field><FieldInput aria-label="Filter" placeholder="Filter" /></Field></FieldRow>
            <Pane>
              <PaneBody>
                <DataTable>
                  <thead><tr><HeadCell $w={183}><span>对象</span></HeadCell><HeadCell><span>类</span></HeadCell></tr></thead>
                  <tbody>
                    {tree.map((r) => (
                      <TreeRow key={r.name} $h={r.h}>
                        <NameCell $indent={r.level ? 100 : 75}>
                          <div><TreeToggle aria-label={r.name}>{r.open && <Down />}</TreeToggle><TreeName $bg={r.bg} $h={r.h}>{r.name}</TreeName></div>
                        </NameCell>
                        <ClassCell $bg={r.bg}><div>{r.icon}{r.cls}</div></ClassCell>
                      </TreeRow>
                    ))}
                  </tbody>
                </DataTable>
              </PaneBody>
              <ScrollTrack $before={83}><ScrollThumb $len={52} /></ScrollTrack>
            </Pane>
          </Dock>

          <Dock $grow={439}>
            <DockHeader title="属性编辑器" />
            <FieldRow $pad="8px 2px 4px">
              <Field><FieldInput aria-label="Filter" placeholder="Filter" /></Field>
              <IconButton $w={37} aria-label="添加">
                <Green />
                <DropMark as="svg" width="7" height="4" viewBox="0 0 7 4"><path d="M0 0h7L3.500 4z" /></DropMark>
              </IconButton>
              <IconButton $w={37} aria-label="移除"><Minus /></IconButton>
              <IconButton $w={37} aria-label="配置">
                <svg width="28" height="28" viewBox="0 0 28 28"><path d="M2 23 14 10q-1-6 5-8l2 1-2 4 2 2 4-2q1 7-5 7h-2L6 26q-3 1-4-3z" fill="#d9d9d9" stroke="#8a8a8a" /><path d="m5 23 12-12" stroke="#444" strokeWidth="1.5" /></svg>
                <DropMark width="7" height="4" viewBox="0 0 7 4"><path d="M0 0h7L3.500 4z" /></DropMark>
              </IconButton>
            </FieldRow>
            <ObjectLabel>actionimport : QAction</ObjectLabel>
            <Pane>
              <PaneBody>
                <DataTable>
                  <thead><tr><HeadCell $w={244}><span>属性</span></HeadCell><HeadCell><span>值</span></HeadCell></tr></thead>
                  <tbody>
                    {props.map((p) =>
                      p.group ? (
                        <PropRow key={p.name} $tone={p.tone}><GroupCell colSpan={2}><button><Down c="#222" />{p.name}</button></GroupCell></PropRow>
                      ) : (
                        <PropRow key={p.name} $tone={p.tone}>
                          <PropName $bold={p.bold} $off={p.off} $gutter={p.gutter ?? Y2}>
                            <div><PropToggle>{p.expand && <Right />}</PropToggle><label htmlFor={`p-${p.name}`}>{p.name}</label></div>
                          </PropName>
                          <PropValue $cjk={/[\u4e00-\u9fff]/.test(p.value ?? "")}>
                            <div>
                              {p.check !== undefined ? (
                                <Check id={`p-${p.name}`} type="checkbox" defaultChecked={p.check} disabled={p.off} />
                              ) : (
                                <>{p.icon && <ValueIcon>{p.icon}</ValueIcon>}<output id={`p-${p.name}`}>{p.value}</output></>
                              )}
                            </div>
                          </PropValue>
                        </PropRow>
                      )
                    )}
                  </tbody>
                </DataTable>
              </PaneBody>
              <ScrollTrack $before={21}><ScrollThumb $len={191} /></ScrollTrack>
            </Pane>
          </Dock>

          <SignalDock $grow={209}>
            <DockHeader title="信号/槽编辑器" />
            <SignalTools>
              <IconButton $w={30} aria-label="添加连接"><Green /></IconButton>
              <IconButton $w={28} aria-label="移除连接"><Minus /></IconButton>
            </SignalTools>
            <Pane>
              <PaneBody>
                <DataTable>
                  <thead>
                    <tr>
                      <SignalHead $w={55}><SortAnchor>发送者<SortMark width="10" height="7" viewBox="0 0 10 7" fill="none" stroke="#777"><path d="M1 1l4 4 4-4" /></SortMark></SortAnchor></SignalHead>
                      <SignalHead $w={40}><span>信号</span></SignalHead>
                      <SignalHead $w={55}><span>接收者</span></SignalHead>
                      <SignalHead><span>槽</span></SignalHead>
                    </tr>
                  </thead>
                </DataTable>
              </PaneBody>
            </Pane>
            <TabBar>
              <Tab $on>信号/槽编辑器</Tab><Tab>动作编辑器</Tab><Tab>资源浏览器</Tab>
            </TabBar>
            <SiteMark>Yuucn.com</SiteMark>
          </SignalDock>
        </RightColumn>
      </Workspace>

      <StatusBar>CSDN @pikeduo</StatusBar>
      <TaskBar>
        <svg width="1200" height="8" viewBox="0 0 1200 8"><ellipse cx="48.5" cy="13" rx="9" ry="7" fill="#c0392b" /><rect x="1142" y="5" width="46" height="12" rx="4" fill="#f2f4fa" /></svg>
      </TaskBar>
    </Window>
  );
}
